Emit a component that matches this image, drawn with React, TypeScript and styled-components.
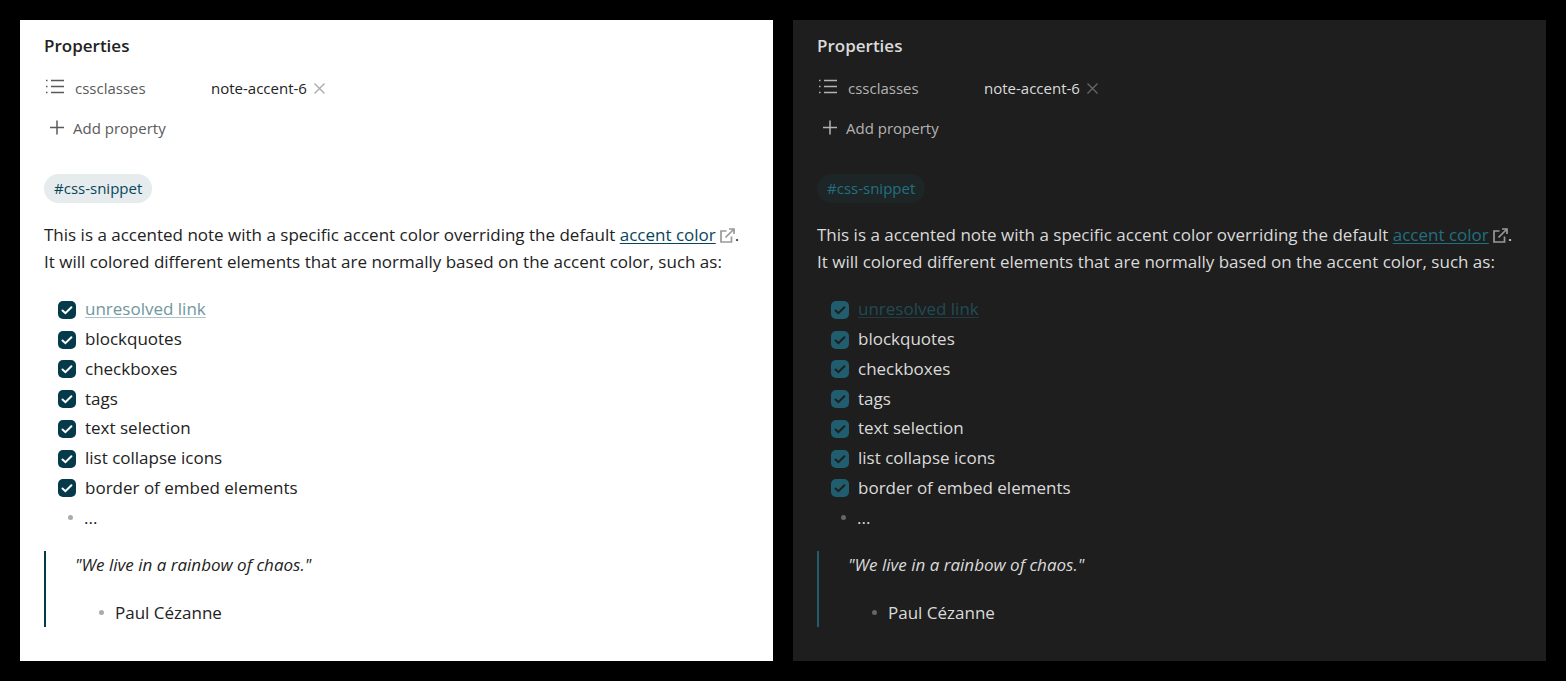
import React from 'react';
import styled, { createGlobalStyle, ThemeProvider } from 'styled-components';

const light = {
  bg: '#ffffff', text: '#222222', muted: '#5a5a5a', icon: '#5c5c5c', faint: '#ababab',
  accent: '#053a4a', tag: '#07465a', tagBg: '#e6ebed', link: '#07465a', unresolved: '#6f989d', underline: '#a9c3c8', mark: '#ffffff', external: '#999999',
};
const dark: typeof light = {
  bg: '#1e1e1e', text: '#dadada', muted: '#b3b3b3', icon: '#b3b3b3', faint: '#666666',
  accent: '#205d6e', tag: '#22707f', tagBg: '#1e2527', link: '#22707f', unresolved: '#1f4c55', underline: '#1f3a40', mark: '#1e1e1e', external: '#999999',
};

type Palette = typeof light;

const GlobalStyle = createGlobalStyle`
  *, *::before, *::after { box-sizing: border-box; }
  body { margin: 0; background: #000; }
  button { font: inherit; border: 0; background: none; padding: 0; color: inherit; cursor: pointer; }
`;

const Page = styled.main`
  display: grid;
  grid-template-columns: 1fr 1fr;
  gap: 20px;
  padding: 20px;
  font-family: "Open Sans", "Noto Sans", sans-serif;
`;

const Note = styled.article<{ theme: Palette }>`
  padding: 12px 24px 34px;
  background: ${({ theme }) => theme.bg};
  color: ${({ theme }) => theme.text};
  font-size: 17px;
  line-height: 27px;
`;

const Heading = styled.h2`
  margin: 0 0 15px;
  font-size: 17px;
  line-height: 27px;
  font-weight: 600;
`;

const PropertyRow = styled.div`
  display: flex;
  align-items: center;
  height: 28px;
  font-size: 15px;
`;

const PropertyName = styled.span<{ theme: Palette }>`
  display: flex;
  align-items: center;
  gap: 9px;
  width: 167px;
  color: ${({ theme }) => theme.muted};
`;

const RemoveButton = styled.button<{ theme: Palette }>`
  display: flex;
  margin-left: 6px;
  color: ${({ theme }) => theme.faint};
`;

const AddButton = styled.button<{ theme: Palette }>`
  && {
    display: flex;
    align-items: center;
    gap: 8px;
    height: 28px;
    margin: 12px 0 32px;
    padding-left: 5px;
    font-size: 15px;
    color: ${({ theme }) => theme.muted};
  }
`;

const LineIcon = styled.svg<{ theme: Palette }>`
  display: block;
  flex: none;
  fill: none;
  stroke: currentColor;
`;

const Tag = styled.a<{ theme: Palette }>`
  display: flex;
  align-items: center;
  width: fit-content;
  height: 29px;
  padding: 0 10px;
  border-radius: 15px;
  background: ${({ theme }) => theme.tagBg};
  color: ${({ theme }) => theme.tag};
  font-size: 15px;
  text-decoration: none;
`;

const Paragraph = styled.p`
  margin: 18px 0 19px;
`;

const Link = styled.a<{ theme: Palette }>`
  color: ${({ theme }) => theme.link};
  text-underline-offset: 2px;
  text-decoration-thickness: 1px;
`;

const UnresolvedLink = styled.a<{ theme: Palette }>`
  color: ${({ theme }) => theme.unresolved};
  text-underline-offset: 2px;
  text-decoration-thickness: 1px;
  text-decoration-color: ${({ theme }) => theme.underline};
`;

const ExternalIcon = styled.svg<{ theme: Palette }>`
  margin: 0 0 0 4px;
  vertical-align: -2px;
  fill: none;
  stroke: ${({ theme }) => theme.external};
  stroke-width: 2;
`;

const List = styled.ul`
  display: grid;
  grid-auto-rows: 1fr;
  height: 238px;
  margin: 0;
  padding: 0 0 0 14px;
  list-style: none;
`;

const Item = styled.li`
  display: flex;
  align-items: center;
`;

const TaskLabel = styled.label`
  display: flex;
  align-items: center;
`;

const CheckBox = styled.span<{ theme: Palette }>`
  display: grid;
  flex: none;
  width: 18px;
  height: 18px;
  margin: 2px 9px 0 0;
  input, svg { grid-area: 1 / 1; }
  input {
    appearance: none;
    width: 18px;
    height: 18px;
    margin: 0;
    border-radius: 5px;
    background: ${({ theme }) => theme.accent};
  }
  svg {
    fill: none;
    stroke: ${({ theme }) => theme.mark};
    stroke-width: 2;
    stroke-linecap: round;
    pointer-events: none;
  }
`;

const Bullet = styled.span<{ theme: Palette }>`
  flex: none;
  width: 5px;
  height: 5px;
  margin: 0 11px 0 10px;
  border-radius: 50%;
  background: ${({ theme }) => theme.faint};
`;

const Quote = styled.blockquote<{ theme: Palette }>`
  margin: 19px 0 0;
  padding: 0 0 1px 29px;
  border-left: 2px solid ${({ theme }) => theme.accent};
`;

const QuoteText = styled.p`
  margin: 0 0 21px;
  font-style: italic;
`;

const Attribution = styled.ul`
  margin: 0;
  padding: 0 0 0 14px;
  list-style: none;
`;

const tasks = ['blockquotes', 'checkboxes', 'tags', 'text selection', 'list collapse icons', 'border of embed elements'];

function Task({ label, children }: { label: string; children: React.ReactNode }) {
  return (
    <Item>
      <TaskLabel>
        <CheckBox>
          <input type="checkbox" defaultChecked aria-label={label} />
          <svg width="18" height="18" viewBox="0 0 18 18">
            <path d="M4.5 9.5 7.4 12.2 13.4 6.2" />
          </svg>
        </CheckBox>
        {children}
      </TaskLabel>
    </Item>
  );
}

function AccentNote() {
  return (
    <Note>
      <Heading>Properties</Heading>
      <PropertyRow>
        <PropertyName>
          <LineIcon width="22" height="18" viewBox="0 0 22 18" strokeWidth="1.5">
            <path d="M7 1.5h13M7 7.5h13M7 13.5h13M2 1.5h1.5M2 7.5h1.5M2 13.5h1.5" />
          </LineIcon>
          cssclasses
        </PropertyName>
        note-accent-6
        <RemoveButton aria-label="Remove note-accent-6">
          <LineIcon width="13" height="13" viewBox="0 0 13 13" strokeWidth="1.4">
            <path d="M1.5 1.5l10 10M11.5 1.5l-10 10" />
          </LineIcon>
        </RemoveButton>
      </PropertyRow>
      <AddButton>
        <LineIcon width="16" height="16" viewBox="0 0 16 16" strokeWidth="1.5">
          <path d="M1 7.5h14M8 .5v14" />
        </LineIcon>
        Add property
      </AddButton>
      <Tag href="#css-snippet">#css-snippet</Tag>
      <Paragraph>
        This is a accented note with a specific accent color overriding the default{' '}
        <Link href="#accent-color">accent color</Link>
        <ExternalIcon width="15" height="15" viewBox="0 0 15 15">
          <path d="M6.5 3H1v11h10.500V8.500M9 1h5v5M14 1 5.500 9.500" strokeWidth="1.7" />
        </ExternalIcon>
        .<br />
        It will colored different elements that are normally based on the accent color, such as:
      </Paragraph>
      <List>
        <Task label="unresolved link">
          <UnresolvedLink href="#unresolved-link">unresolved link</UnresolvedLink>
        </Task>
        {tasks.map((task) => (
          <Task key={task} label={task}>{task}</Task>
        ))}
        <Item><Bullet />...</Item>
      </List>
      <Quote>
        <QuoteText>"We live in a rainbow of chaos."</QuoteText>
        <Attribution>
          <Item><Bullet />Paul Cézanne</Item>
        </Attribution>
      </Quote>
    </Note>
  );
}

export default function App() {
  return (
    <>
      <GlobalStyle />
      <Page>
        <ThemeProvider theme={light}><AccentNote /></ThemeProvider>
        <ThemeProvider theme={dark}><AccentNote /></ThemeProvider>
      </Page>
    </>
  );
}
